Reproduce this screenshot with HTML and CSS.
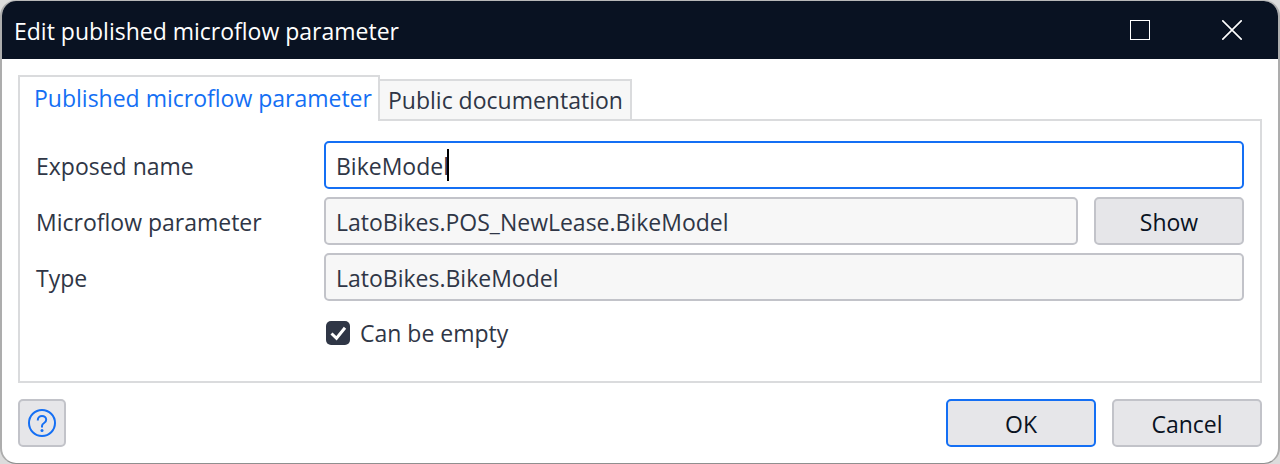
FILE: index.html
```
<!DOCTYPE html>
<html lang="en">
<head>
<meta charset="utf-8">
<title>Edit published microflow parameter</title>
<link rel="stylesheet" href="styles.css">
</head>
<body>
<main class="dialog" role="dialog" aria-labelledby="dialog-title">
  <header class="titlebar">
    <h1 class="title" id="dialog-title">Edit published microflow parameter</h1>
    <div class="window-controls">
      <button class="window-button" type="button" aria-label="Maximize">
        <svg width="20" height="20" viewBox="0 0 20 20" fill="none" stroke="currentColor"><rect x=".5" y=".5" width="19" height="19"/></svg>
      </button>
      <button class="window-button" type="button" aria-label="Close">
        <svg width="20" height="20" viewBox="0 0 20 20" fill="none" stroke="currentColor" stroke-width="1.6"><path d="M.3.3l19.4 19.4M19.7.3L.3 19.7"/></svg>
      </button>
    </div>
  </header>
  <form class="content">
    <div class="tabs" role="tablist">
      <button class="tab tab-active" type="button" role="tab" aria-selected="true">Published microflow parameter</button>
      <button class="tab" type="button" role="tab" aria-selected="false">Public documentation</button>
    </div>
    <section class="panel" role="tabpanel">
      <div class="row">
        <label class="label" for="exposed-name">Exposed name</label>
        <div class="field">
          <input class="input input-focused" id="exposed-name" type="text" value="BikeModel">
          <span class="caret"></span>
        </div>
      </div>
      <div class="row">
        <label class="label" for="microflow-parameter">Microflow parameter</label>
        <div class="field">
          <input class="input" id="microflow-parameter" type="text" value="LatoBikes.POS_NewLease.BikeModel" readonly>
          <button class="button" type="button">Show</button>
        </div>
      </div>
      <div class="row">
        <label class="label" for="type">Type</label>
        <div class="field">
          <input class="input" id="type" type="text" value="LatoBikes.BikeModel" readonly>
        </div>
      </div>
      <div class="row row-check">
        <label class="check"><input class="checkbox" type="checkbox" checked>
          <svg class="tick" width="24" height="24" viewBox="0 0 24 24" fill="none" stroke="currentColor" stroke-width="3"><path d="M5.500 12.500l5 4.800L19 6.800"/></svg>
          <span>Can be empty</span></label>
      </div>
    </section>
    <footer class="actions">
      <button class="button button-help" type="button" aria-label="Help">
        <svg width="28" height="28" viewBox="0 0 28 28" fill="none" stroke="currentColor" stroke-width="2"><circle cx="14" cy="14" r="13"/><path d="M9.800 11.600V11c0-2.300 1.800-4 4.200-4s4.200 1.600 4.200 3.700c0 1.700-.8 2.500-2.100 3.300-1.500.9-2.100 1.500-2.100 3v1.500"/><circle cx="14" cy="21.500" r="1.500" fill="currentColor" stroke="none"/></svg>
      </button>
      <button class="button button-primary" type="submit">OK</button>
      <button class="button" type="button">Cancel</button>
    </footer>
  </form>
</main>
</body>
</html>
```
FILE: styles.css
```
* {
  box-sizing: border-box;
}

body {
  margin: 0;
  background: #dcdcdc;
  color: #2f3646;
  font: 400 23px/32px "Open Sans", "Noto Sans", sans-serif;
}

button,
input {
  margin: 0;
  color: inherit;
  font: inherit;
}

.dialog {
  overflow: hidden;
  border: 2px solid #adadad;
  border-top: 1px solid #b8b8b8;
  border-bottom: 1px solid #8f8f8f;
  border-radius: 16px;
  background: #fff;
}

.titlebar {
  display: flex;
  align-items: center;
  justify-content: space-between;
  height: 58px;
  padding-left: 12px;
  background: #091222;
  color: #fff;
}

.title {
  margin: 0;
  padding-top: 2px;
  font-size: 23px;
  font-weight: inherit;
  line-height: 32px;
}

.window-controls {
  display: flex;
}

.window-button {
  display: grid;
  place-items: center;
  width: 92px;
  height: 58px;
  padding: 0;
  border: 0;
  background: none;
}

.content {
  padding: 16px;
}

.tabs {
  position: relative;
  display: flex;
  align-items: flex-end;
  margin-bottom: -2px;
}

.tab {
  min-width: 254px;
  height: 42px;
  padding: 0 6px 0 8px;
  border: 2px solid #dadbdd;
  background: #f7f7f7;
  text-align: left;
  white-space: nowrap;
}

.tab-active {
  position: relative;
  z-index: 1;
  min-width: 362px;
  height: 46px;
  margin-right: -2px;
  padding: 0 6px 2px 14px;
  border-bottom: 0;
  background: #fff;
  color: #146ff4;
}

.panel {
  display: flex;
  flex-direction: column;
  gap: 8px;
  padding: 20px 16px 24px;
  border: 2px solid #dadbdd;
}

.row {
  display: grid;
  grid-template-columns: 288px 1fr;
  align-items: center;
}

.label {
  padding-top: 2px;
}

.field {
  position: relative;
  display: flex;
  gap: 16px;
}

.input {
  flex: 1;
  min-width: 0;
  height: 48px;
  padding: 2px 10px 0;
  border: 2px solid #c2c3c9;
  border-radius: 5px;
  outline: 0;
  background: #f7f7f7;
}

.input-focused {
  border-color: #146ff4;
  background: #fff;
}

.caret {
  position: absolute;
  top: 8px;
  left: 123px;
  width: 2px;
  height: 32px;
  background: #000;
}

.button {
  width: 150px;
  height: 48px;
  padding: 2px 0 0;
  border: 2px solid #c2c3c9;
  border-radius: 5px;
  background: #e6e6e9;
  color: #091222;
}

.row-check {
  height: 48px;
}

.check {
  position: relative;
  display: flex;
  grid-column: 2;
  align-items: center;
  gap: 10px;
  padding-left: 2px;
}

.checkbox {
  width: 24px;
  height: 24px;
  border-radius: 5px;
  background: #2f3646;
  appearance: none;
}

.tick {
  position: absolute;
  left: 2px;
  color: #fff;
}

.actions {
  display: flex;
  gap: 16px;
  padding-top: 16px;
}

.button-help {
  display: grid;
  place-items: center;
  width: 48px;
  margin-right: auto;
  padding: 0;
  color: #146ff4;
}

.button-primary {
  border-color: #146ff4;
}
```
